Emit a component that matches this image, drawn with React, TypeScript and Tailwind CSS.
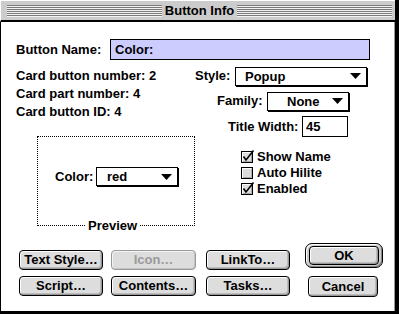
import React from 'react';

const Arrow = () => (
  <svg width="11" height="6" viewBox="0 0 11 6" className="mr-[5px] shrink-0">
    <polygon points="0,0 11,0 5.5,6" fill="#000" />
  </svg>
);

function Popup({ label, className, textClass }: { label: string; className: string; textClass: string }) {
  return (
    <div className={`flex items-center h-[19px] bg-white border border-black shadow-[1px_1px_0_#000] ${className}`}>
      <span className={`flex-1 leading-none ${textClass}`}>{label}</span>
      <Arrow />
    </div>
  );
}

function CheckBox({ checked, label }: { checked: boolean; label: string }) {
  return (
    <div className="flex items-center h-[16px]">
      <svg width="14" height="13" viewBox="0 0 14 13" className="shrink-0 -mt-[1px]">
        <rect x="0.5" y="1.5" width="11" height="11" fill="#dddddd" stroke="#000" />
        <path d="M1.5 11.5 V2.5 H10.5" fill="none" stroke="#fff" />
        <path d="M2 11.5 H10.5 V3" fill="none" stroke="#aaa" />
        {checked && (
          <path d="M2.5 6.5 L5 10 L12.5 0.5" fill="none" stroke="#000" strokeWidth="1.6" />
        )}
      </svg>
      <span className="ml-[2px]">{label}</span>
    </div>
  );
}

function Button({ label, className, disabled }: { label: string; className: string; disabled?: boolean }) {
  return (
    <div
      className={`flex items-center justify-center rounded-[4px] border ${
        disabled
          ? 'border-[#999] text-[#9a9a9a] bg-[#dddddd] shadow-[inset_1px_1px_0_#f4f4f4,inset_-1px_-1px_0_#c4c4c4]'
          : 'border-black text-black bg-[#dddddd] shadow-[inset_1px_1px_0_#fff,inset_-1px_-1px_0_#999,inset_-2px_-2px_0_#bbb]'
      } ${className}`}
    >
      {label}
    </div>
  );
}

const stripes =
  'flex-1 h-[12px] bg-[repeating-linear-gradient(to_bottom,#7a7a7a_0px,#7a7a7a_1px,#f2f2f2_1px,#f2f2f2_2px)]';

export default function App() {
  return (
    <div className="w-[399px] h-[314px] flex flex-col border-r-[4px] border-b-[3px] border-black bg-white font-['Liberation_Sans',Arial,sans-serif] font-bold text-[13px] text-black">
      {/* title bar */}
      <div className="h-[22px] flex items-center pl-[6px] pr-[3px] bg-[#cccccc] border-t border-l border-white border-b-2 border-b-black">
        <div className={stripes} />
        <div className="px-[3px] leading-none text-[13px]">Button Info</div>
        <div className={stripes} />
      </div>

      <div className="flex-1 flex flex-col border-l border-black border-r border-r-[#999]">
        {/* name */}
        <div className="mt-[17px] flex items-center pl-[15px]">
          <span className="w-[94px]">Button Name:</span>
          <div className="w-[260px] h-[21px] flex items-center pl-[4px] bg-[#ccccff] border border-black">Color:</div>
        </div>

        <div className="mt-[6px] h-[177px] flex">
          {/* left column */}
          <div className="w-[194px] pl-[15px] pt-[1px] flex flex-col">
            <div className="leading-[18px]">Card button number: 2</div>
            <div className="leading-[18px]">Card part number: 4</div>
            <div className="leading-[18px]">Card button ID: 4</div>
            <div className="relative ml-[21px] mt-[15px] w-[158px] h-[90px] border border-dotted border-black">
              <div className="flex items-center pl-[17px] pt-[30px]">
                <span className="w-[41px]">Color:</span>
                <Popup label="red" className="w-[82px]" textClass="pl-[10px]" />
              </div>
              <span className="absolute left-[47px] bottom-[-9px] px-[3px] bg-white leading-[16px]">Preview</span>
            </div>
          </div>

          {/* right column */}
          <div className="flex flex-col">
            <div className="flex items-center h-[20px]">
              <span className="w-[40px]">Style:</span>
              <Popup label="Popup" className="w-[132px]" textClass="pl-[9px]" />
            </div>
            <div className="flex items-center h-[20px] mt-[5px] pl-[22px]">
              <span className="w-[50px]">Family:</span>
              <Popup label="None" className="w-[82px]" textClass="pl-[19px]" />
            </div>
            <div className="flex items-center h-[21px] mt-[5px] pl-[33px]">
              <span className="w-[74px]">Title Width:</span>
              <div className="w-[46px] h-[21px] flex items-center pl-[3px] bg-white border border-black">45</div>
            </div>
            <div className="mt-[12px] pl-[46px] flex flex-col">
              <CheckBox checked label="Show Name" />
              <CheckBox checked={false} label="Auto Hilite" />
              <CheckBox checked label="Enabled" />
            </div>
          </div>
        </div>

        {/* buttons */}
        <div className="flex">
          <div className="pl-[18px] pt-[7px] flex flex-col gap-[6px]">
            <div className="flex">
              <Button label="Text Style…" className="w-[84px] h-[20px]" />
              <Button label="Icon…" className="w-[85px] h-[20px] ml-[8px]" disabled />
              <Button label="LinkTo…" className="w-[84px] h-[20px] ml-[10px]" />
            </div>
            <div className="flex">
              <Button label="Script…" className="w-[84px] h-[20px]" />
              <Button label="Contents…" className="w-[85px] h-[20px] ml-[8px]" />
              <Button label="Tasks…" className="w-[84px] h-[20px] ml-[10px]" />
            </div>
          </div>
          <div className="ml-[15px] flex flex-col">
            <div className="w-[78px] h-[25px] px-[3px] py-[2px] rounded-[7px] border border-black bg-[#cccccc] shadow-[inset_1px_1px_0_#fff,inset_-1px_-1px_0_#888]">
              <Button label="OK" className="w-full h-full" />
            </div>
            <Button label="Cancel" className="w-[70px] h-[21px] mt-[8px] ml-[3px]" />
          </div>
        </div>
      </div>
    </div>
  );
}
